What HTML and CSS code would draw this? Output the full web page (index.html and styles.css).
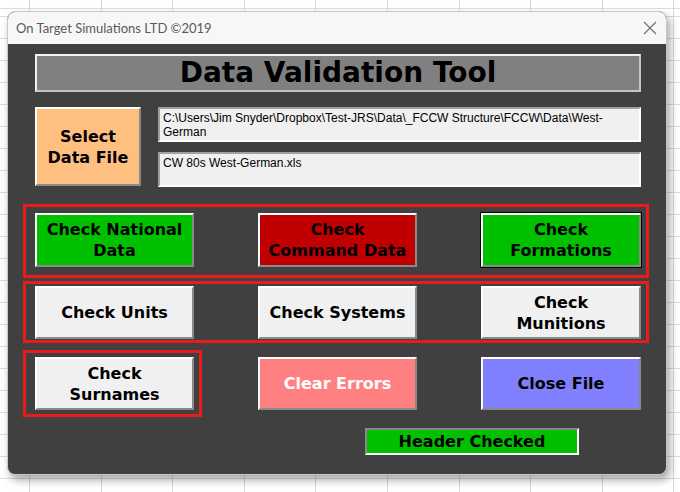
FILE: index.html
```html
<!DOCTYPE html>
<html lang="en">
<head>
    <meta charset="UTF-8">
    <title>Data Validation Tool</title>
    <link rel="stylesheet" href="styles.css">
</head>
<body>
    <div class="window">
        <div class="titlebar">
            <span class="title">On Target Simulations LTD &copy;2019</span>
            <svg class="close-x" width="14" height="14" viewBox="0 0 14 14">
                <path d="M1 1 L13 13 M13 1 L1 13" stroke="#6e6e6e" stroke-width="1.1" fill="none"/>
            </svg>
        </div>
        <div class="form">
            <div class="heading">Data Validation Tool</div>

            <div class="file-row">
                <button class="btn btn-orange select-btn">Select<br>Data File</button>
                <div class="file-boxes">
                    <div class="textbox">C:\Users\Jim Snyder\Dropbox\Test-JRS\Data\_FCCW Structure\FCCW\Data\West-<br>German</div>
                    <div class="textbox">CW 80s West-German.xls</div>
                </div>
            </div>

            <div class="frame frame-top">
                <button class="btn btn-green">Check National<br>Data</button>
                <button class="btn btn-red">Check<br>Command Data</button>
                <button class="btn btn-green focused">Check<br>Formations</button>
            </div>

            <div class="frame frame-mid">
                <button class="btn">Check Units</button>
                <button class="btn">Check Systems</button>
                <button class="btn">Check<br>Munitions</button>
            </div>

            <div class="bottom-row">
                <div class="frame frame-single">
                    <button class="btn">Check<br>Surnames</button>
                </div>
                <button class="btn btn-pink clear-btn">Clear Errors</button>
                <button class="btn btn-blue close-btn">Close File</button>
            </div>

            <div class="status">Header Checked</div>
        </div>
    </div>
</body>
</html>
```

FILE: styles.css
```css
body {
    margin: 0;
    width: 680px;
    height: 492px;
    overflow: hidden;
    background-color: #ffffff;
    background-image:
        repeating-linear-gradient(to right, #d6d6d6 0, #d6d6d6 1px, transparent 1px, transparent 71.6px),
        repeating-linear-gradient(to bottom, #dcdcdc 0, #dcdcdc 1px, transparent 1px, transparent 22px);
    background-position: 29px 0, 0 16px;
    font-family: "Lato", "Liberation Sans", sans-serif;
}

.window {
    margin: 11px 0 0 7px;
    width: 658px;
    height: 462px;
    border: 1px solid #c8c8c8;
    border-radius: 8px;
    overflow: hidden;
    background: #404040;
    box-shadow: 3px 5px 8px rgba(0, 0, 0, 0.35);
}

.titlebar {
    height: 32px;
    background: #f7f7f7;
    display: flex;
    align-items: center;
    justify-content: space-between;
    padding: 0 9px 0 8px;
}

.title {
    font-size: 13px;
    color: #5a5a5a;
}

.form {
    padding: 10px 0 0 15px;
}

.heading {
    margin-left: 12px;
    width: 602px;
    height: 34px;
    background: #808080;
    border: 2px solid #f2f2f2;
    border-right-color: #c4c4c4;
    border-bottom-color: #c4c4c4;
    text-align: center;
    font-family: "DejaVu Sans", sans-serif;
    font-size: 28px;
    font-weight: bold;
    line-height: 34px;
    color: #000;
}

.btn {
    display: block;
    padding: 0;
    margin: 0;
    font-family: "DejaVu Sans", sans-serif;
    font-size: 16px;
    font-weight: bold;
    line-height: 21px;
    color: #000;
    background: #f0f0f0;
    border: 2px solid #ffffff;
    border-right-color: #8a8a8a;
    border-bottom-color: #8a8a8a;
    text-align: center;
}

.btn-green { background: #00c000; }
.btn-red { background: #c00000; }
.btn-orange { background: #ffbf80; }
.btn-pink { background: #ff8080; color: #ffffff; }
.btn-blue { background: #8080ff; }

.focused {
    outline: 1px solid #000;
}

.file-row {
    display: flex;
    margin: 15px 0 0 12px;
}

.select-btn {
    width: 106px;
    height: 79px;
}

.file-boxes {
    margin-left: 17px;
    display: flex;
    flex-direction: column;
    gap: 10px;
}

.textbox {
    box-sizing: border-box;
    width: 483px;
    height: 35px;
    padding: 2px 3px;
    background: #f0f0f0;
    border: 2px solid #a0a0a0;
    border-right-color: #ffffff;
    border-bottom-color: #ffffff;
    font-family: "Liberation Sans", sans-serif;
    font-size: 12px;
    line-height: 14px;
    color: #000;
}

.frame {
    border: 3px solid #e81c1c;
    box-sizing: border-box;
}

.frame-top,
.frame-mid {
    width: 626px;
    display: grid;
    grid-template-columns: 159px 159px 160px;
    column-gap: 64px;
    padding-left: 9px;
}

.frame-top {
    margin-top: 17px;
    height: 74px;
    padding-top: 6px;
}

.frame-top .btn {
    height: 54px;
}

.frame-mid {
    margin-top: 3px;
    height: 62px;
    padding-top: 2px;
}

.frame-mid .btn {
    height: 53px;
}

.bottom-row {
    display: flex;
    align-items: center;
    margin-top: 7px;
}

.frame-single {
    width: 179px;
    height: 67px;
    padding: 4px 0 0 9px;
}

.bottom-row .btn {
    width: 159px;
    height: 53px;
}

.clear-btn {
    margin-left: 56px;
}

.bottom-row .close-btn {
    margin-left: 64px;
    width: 160px;
}

.status {
    margin: 11px 0 0 342px;
    width: 210px;
    height: 23px;
    background: #00c000;
    border: 2px solid #8a8a8a;
    border-right-color: #ffffff;
    border-bottom-color: #ffffff;
    text-align: center;
    font-family: "DejaVu Sans", sans-serif;
    font-size: 16px;
    font-weight: bold;
    line-height: 23px;
    color: #000;
}
```
